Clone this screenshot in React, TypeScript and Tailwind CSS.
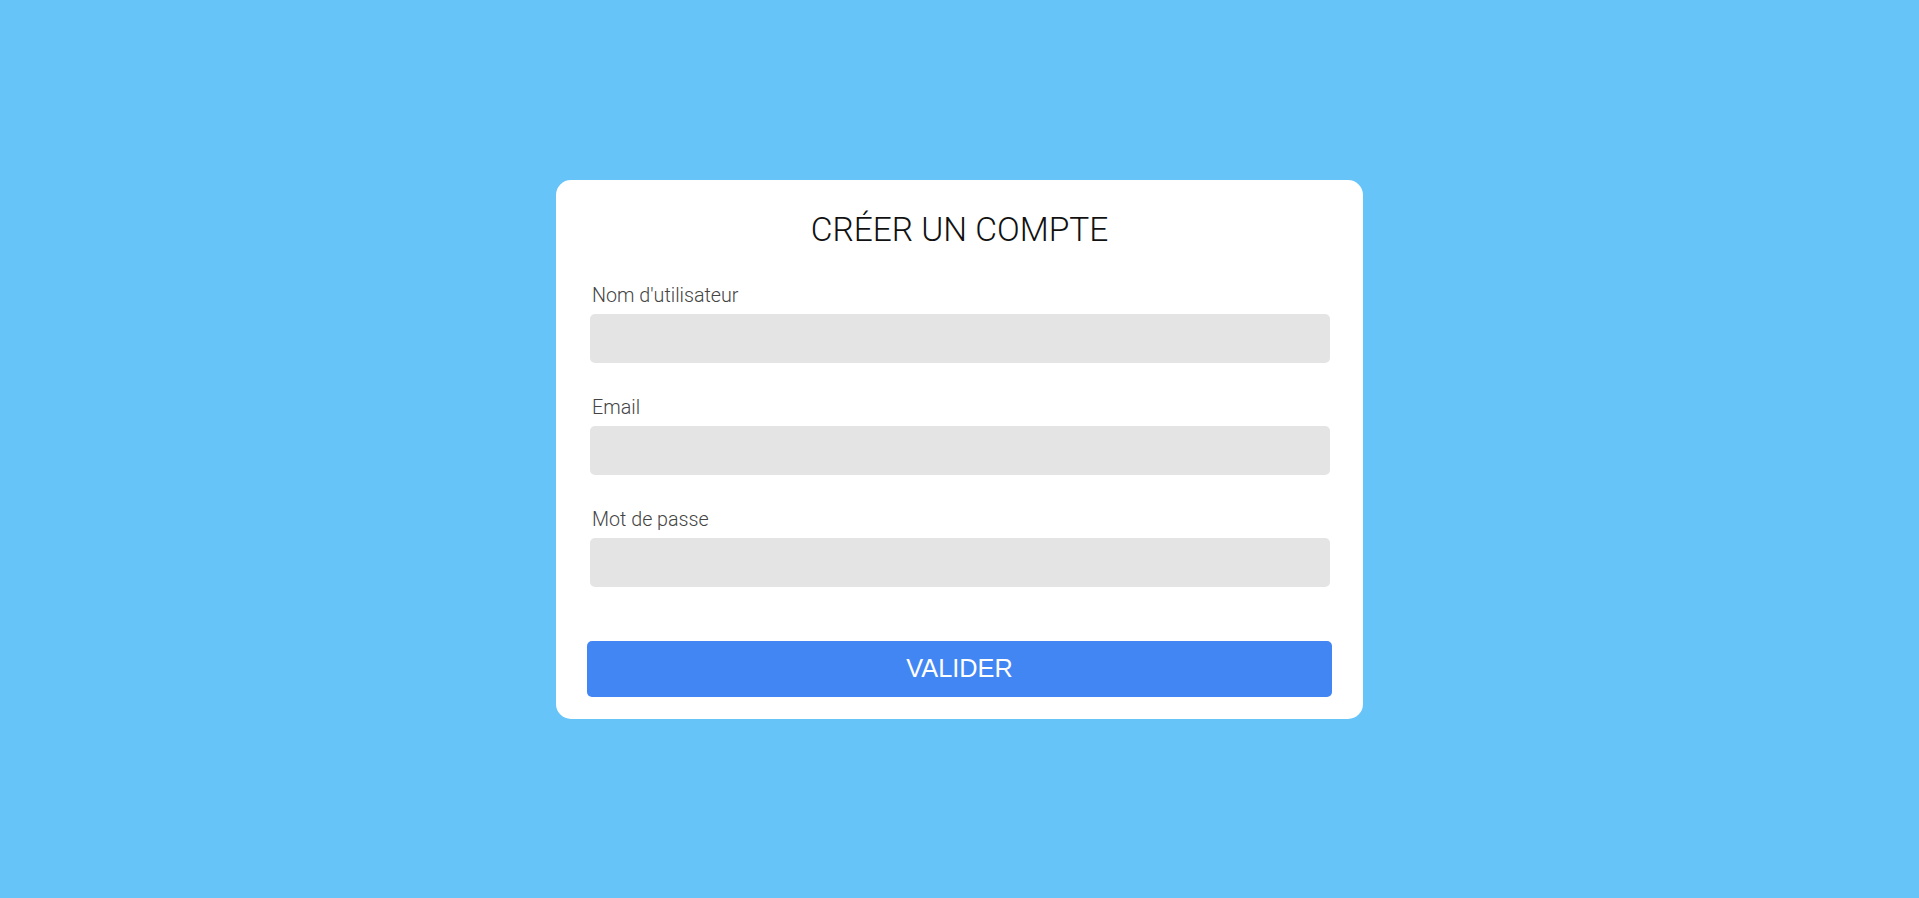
import React from "react";

const fields = [
  { label: "Nom d'utilisateur", type: "text" },
  { label: "Email", type: "email" },
  { label: "Mot de passe", type: "password" },
];

const App = () => {
  return (
    <div className="min-h-screen w-full bg-[#67c4f8] flex items-center justify-center">
      {/* Carte d'inscription */}
      <form
        className="w-[807px] bg-white rounded-[15px] px-[31px] pt-[31px] pb-[22px] font-['Roboto',sans-serif]"
        onSubmit={(e) => e.preventDefault()}
      >
        <h1 className="text-center text-[33.5px] leading-[38px] font-light text-[#111]">
          CRÉER UN COMPTE
        </h1>

        <div className="mt-[35px] flex flex-col gap-[33px]">
          {fields.map((f) => (
            <div key={f.label}>
              <label className="block pl-[5px] text-[19.7px] leading-[23px] font-light text-[#444] mb-[7px]">
                {f.label}
              </label>
              <input
                type={f.type}
                className="block ml-[3px] mr-[2px] w-[740px] h-[49px] rounded-[5px] bg-[#e4e4e4] outline-none px-3"
              />
            </div>
          ))}
        </div>

        <button
          type="submit"
          className="mt-[54px] w-full h-[56px] rounded-[5px] bg-[#4286f4] text-white text-[25.3px] font-['Liberation_Sans',Arial,sans-serif]"
        >
          VALIDER
        </button>
      </form>
    </div>
  );
};

export default App;
